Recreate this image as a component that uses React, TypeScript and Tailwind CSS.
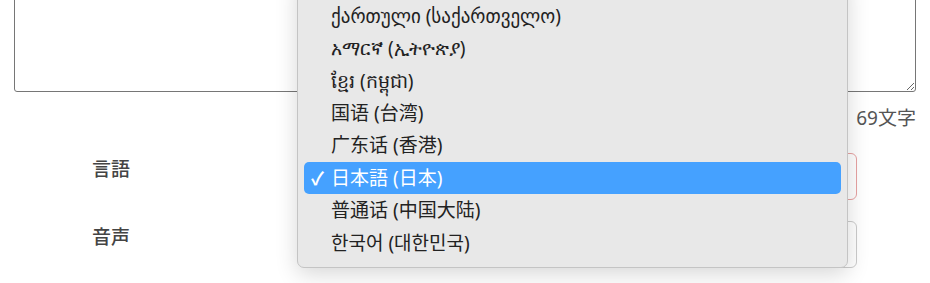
import React from 'react';

// Native-looking select popup over a settings form

const FONT = '"Noto Sans", "Noto Sans CJK JP", "DejaVu Sans", sans-serif';

const LANGUAGES = [
  'ქართული (საქართველო)',
  'አማርኛ (ኢትዮጵያ)',
  'ខ្មែរ (កម្ពុជា)',
  '国语 (台湾)',
  '广东话 (香港)',
  '日本語 (日本)',
  '普通话 (中国大陆)',
  '한국어 (대한민국)',
];

const SELECTED = '日本語 (日本)';

const App: React.FC = () => {
  return (
    <div className="relative h-[283px] w-[930px] overflow-hidden bg-white" style={{ fontFamily: FONT }}>
      {/* Text area (scrolled, top cut off) */}
      <textarea
        className="mx-[14px] mt-[-40px] block h-[132px] w-[902px] rounded-[3px] border border-[#767676] bg-white"
        defaultValue=""
      />
      <div className="mt-[13px] pr-[14px] text-right text-[19px] leading-[26px] text-[#555]">69文字</div>

      {/* Form rows */}
      <div className="mt-[22px] flex items-start">
        <div className="pl-[92px] pt-[5px] text-[19px] font-medium leading-[22px] text-[#444]">言語</div>
        <div className="ml-auto mr-[73px] h-[47px] w-[550px] rounded-[6px] border border-[#e8a3a3] bg-white" />
      </div>
      <div className="mt-[21px] flex items-start">
        <div className="pl-[92px] pt-[5px] text-[19px] font-medium leading-[22px] text-[#444]">音声</div>
        <div className="ml-auto mr-[73px] h-[47px] w-[550px] rounded-[6px] border border-[#cccccc] bg-white" />
      </div>

      {/* Open dropdown menu, its top runs past the window */}
      <div className="absolute bottom-[15px] left-[297px] w-[551px] rounded-[7px] border border-[#c4c4c4] bg-[#e8e8e8] px-[6px] pb-[8px] pt-[24px] shadow-[0_6px_22px_rgba(0,0,0,0.16)]">
        {LANGUAGES.map((lang) => {
          const active = lang === SELECTED;
          return (
            <div
              key={lang}
              className={`relative flex h-[32.4px] items-center rounded-[5px] pl-[27px] text-[19px] ${
                active ? 'bg-[#45a1ff] text-white' : 'text-[#222]'
              }`}
            >
              {active && (
                <span className="absolute left-[7px] top-1/2 -translate-y-1/2 text-[18px] font-semibold">✓</span>
              )}
              {lang}
            </div>
          );
        })}
      </div>
    </div>
  );
};

export default App;
